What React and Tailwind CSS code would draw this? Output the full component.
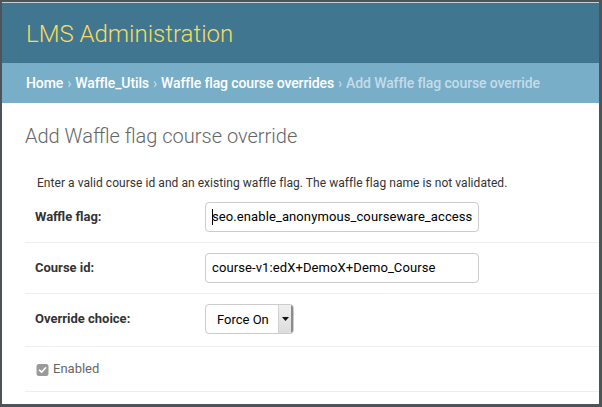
import React from "react";

export default function App() {
  return (
    <div className="w-[602px] h-[407px] bg-[#4b5559] pl-[2px] pt-[2px] pr-[3px] pb-[3px] overflow-hidden" style={{ fontFamily: "Roboto, 'Liberation Sans', sans-serif" }}>
      <div className="bg-white h-full flex flex-col overflow-hidden border-t border-[#c9d0d3]">
        <div className="h-[60px] shrink-0 bg-[#417690] pl-[24px] flex items-center">
          <h1 className="text-[24px] font-light text-[#f5dd5d] leading-[28px] mt-[2px]">LMS Administration</h1>
        </div>
        <div className="h-[40px] shrink-0 bg-[#79aec8] pl-[24px] flex items-center text-[14px] font-medium tracking-[-0.11px] text-[#c4dce8] leading-[18px]">
          <span className="text-white">Home</span>
          <span className="mx-[4px]">›</span>
          <span className="text-white">Waffle_Utils</span>
          <span className="mx-[4px]">›</span>
          <span className="text-white">Waffle flag course overrides</span>
          <span className="mx-[4px]">›</span>
          <span>Add Waffle flag course override</span>
        </div>
        <div className="pl-[23px] flex flex-col">
          <h1 className="mt-[21px] text-[20px] font-light text-[#666] leading-[24px]">Add Waffle flag course override</h1>
          <p className="mt-[27px] pl-[12px] text-[12px] tracking-[0.05px] leading-[17px] text-[#333]">Enter a valid course id and an existing waffle flag. The waffle flag name is not validated.</p>
          <div className="flex items-center py-[10px] pl-[10px] border-b border-[#eeeeee]">
            <label className="w-[170px] text-[13px] font-bold text-[#333]">Waffle flag:</label>
            <div className="w-[274px] h-[30px] border border-[#cccccc] rounded-[4px] pl-[6px] flex items-center text-[13px] tracking-[0.1px] text-black">
              <span className="w-px h-[16px] bg-black -mr-px"></span>
              <span>seo.enable_anonymous_courseware_access</span>
            </div>
          </div>
          <div className="flex items-center pt-[10px] pb-[10px] pl-[10px] border-b border-[#eeeeee]">
            <label className="w-[170px] text-[13px] font-bold text-[#333]">Course id:</label>
            <div className="w-[274px] h-[30px] border border-[#cccccc] rounded-[4px] pl-[6px] flex items-center text-[13px] tracking-[0.1px] text-black">
              course-v1:edX+DemoX+Demo_Course
            </div>
          </div>
          <div className="flex items-center pt-[10px] pb-[12px] pl-[10px] border-b border-[#eeeeee]">
            <label className="w-[170px] text-[13px] font-bold text-[#333]">Override choice:</label>
            <div className="w-[89px] h-[30px] border border-[#cccccc] rounded-[4px] flex items-stretch overflow-hidden text-[13px] text-black">
              <div className="flex-1 flex items-center pl-[11px] pt-[1px]">Force On</div>
              <div className="w-[15px] bg-gradient-to-b from-[#f0f0f0] to-[#dcdcdc] border-l border-[#d0d0d0] border-r-2 border-r-[#8c8c8c] flex items-center justify-center">
                <svg width="7" height="4" viewBox="0 0 7 4"><path d="M0 0 H7 L3.5 4 Z" fill="#111" /></svg>
              </div>
            </div>
          </div>
          <div className="h-[45px] flex items-center pl-[11px] border-b border-[#eeeeee]">
            <svg width="13" height="12" viewBox="0 0 13 12" className="mr-[4px] mt-[1px]">
              <rect x="0.5" y="0" width="12" height="12" rx="2.5" fill="#9a9a9a" />
              <path d="M3.5 6.2 L5.6 8.2 L9.6 3.8" stroke="#fff" strokeWidth="1.6" fill="none" strokeLinecap="round" strokeLinejoin="round" />
            </svg>
            <span className="text-[13px] text-[#666]">Enabled</span>
          </div>
        </div>
      </div>
    </div>
  );
}
